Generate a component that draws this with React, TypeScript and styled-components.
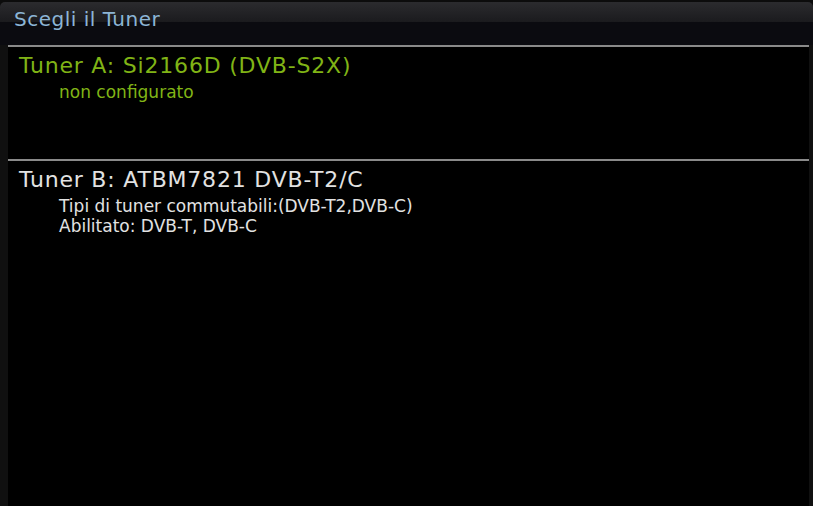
import React from "react";
import styled, { createGlobalStyle } from "styled-components";

const GlobalStyle = createGlobalStyle`
  html, body {
    margin: 0;
    padding: 0;
    background: #000;
  }
  body {
    font-family: "DejaVu Sans", Verdana, sans-serif;
  }
`;

const Screen = styled.div`
  width: 813px;
  height: 506px;
  display: flex;
  flex-direction: column;
  padding-top: 2px;
  box-sizing: border-box;
  background: #0c0c0c;
  overflow: hidden;
`;

const Header = styled.div`
  height: 43px;
  box-sizing: border-box;
  padding: 5px 0 0 14px;
  border-radius: 5px 5px 0 0;
  background: linear-gradient(#2b2b2e 0, #1b1b1e 20px, #0b0b10 20px, #0b0b10 100%);
  color: #8cb5d5;
  font-size: 20px;
  line-height: 24px;
  letter-spacing: 0.5px;
`;

const Body = styled.div`
  flex: 1;
  display: flex;
`;

const SideStrip = styled.div<{ $w: number }>`
  width: ${(p) => p.$w}px;
  background: #101010;
`;

const List = styled.div`
  flex: 1;
  background: #000;
  display: flex;
  flex-direction: column;
`;

const Entry = styled.div`
  height: 114px;
  box-sizing: border-box;
  border-top: 2px solid #8a8a8a;
  padding: 6px 0 0 11px;
`;

const Heading = styled.div<{ $c: string }>`
  color: ${(p) => p.$c};
  font-size: 22px;
  line-height: 26px;
  letter-spacing: 0.8px;
`;

const Details = styled.div<{ $c: string }>`
  margin-top: 3px;
  padding-left: 40px;
  color: ${(p) => p.$c};
  font-size: 17px;
  line-height: 20px;
`;

const tuners = [
  {
    name: "Tuner A: Si2166D (DVB-S2X)",
    color: "#80b416",
    lines: ["non configurato"],
  },
  {
    name: "Tuner B: ATBM7821 DVB-T2/C",
    color: "#e2e2e2",
    lines: ["Tipi di tuner commutabili:(DVB-T2,DVB-C)", "Abilitato: DVB-T, DVB-C"],
  },
];

export default function App() {
  return (
    <>
      <GlobalStyle />
      <Screen>
        <Header>Scegli il Tuner</Header>
        <Body>
          <SideStrip $w={8} />
          <List>
            {tuners.map((t) => (
              <Entry key={t.name}>
                <Heading $c={t.color}>{t.name}</Heading>
                <Details $c={t.color}>
                  {t.lines.map((l) => (
                    <div key={l}>{l}</div>
                  ))}
                </Details>
              </Entry>
            ))}
          </List>
          <SideStrip $w={4} />
        </Body>
      </Screen>
    </>
  );
}
